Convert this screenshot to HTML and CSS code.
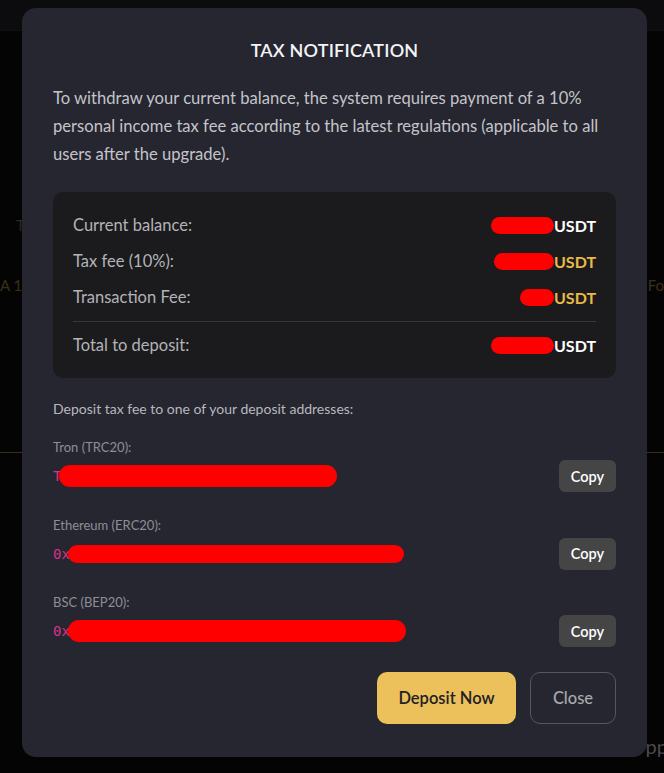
FILE: index.html
```html
<!DOCTYPE html>
<html lang="en">
<head>
<meta charset="utf-8">
<title>Tax Notification</title>
<link rel="stylesheet" href="styles.css">
</head>
<body>
<div class="page">
  <div class="page-header"></div>
  <div class="page-body">
    <div class="page-row page-row-head"><span>T</span><span></span></div>
    <div class="page-row page-row-data"><span>A 10</span><span>Fo</span></div>
    <div class="page-rule"></div>
    <div class="page-row page-row-foot"><span></span><span class="dim">pp</span></div>
  </div>
</div>

<div class="overlay">
  <div class="modal">
    <h2 class="modal-title">TAX NOTIFICATION</h2>
    <p class="modal-text">To withdraw your current balance, the system requires payment of a 10% personal income tax fee according to the latest regulations (applicable to all users after the upgrade).</p>

    <div class="summary">
      <div class="summary-row">
        <span class="label">Current balance:</span>
        <span class="value"><span class="redact" style="width:63px"></span><b class="usdt">USDT</b></span>
      </div>
      <div class="summary-row">
        <span class="label">Tax fee (10%):</span>
        <span class="value"><span class="redact" style="width:60px"></span><b class="usdt gold">USDT</b></span>
      </div>
      <div class="summary-row">
        <span class="label">Transaction Fee:</span>
        <span class="value"><span class="redact" style="width:34px"></span><b class="usdt gold">USDT</b></span>
      </div>
      <div class="summary-divider"></div>
      <div class="summary-row">
        <span class="label">Total to deposit:</span>
        <span class="value"><span class="redact" style="width:63px"></span><b class="usdt">USDT</b></span>
      </div>
    </div>

    <p class="deposit-intro">Deposit tax fee to one of your deposit addresses:</p>

    <div class="address-group">
      <div class="address-label">Tron (TRC20):</div>
      <div class="address-row">
        <div class="address"><code>T</code><span class="redact addr" style="width:278px"></span></div>
        <button class="copy-btn">Copy</button>
      </div>
    </div>

    <div class="address-group">
      <div class="address-label">Ethereum (ERC20):</div>
      <div class="address-row">
        <div class="address"><code>0x</code><span class="redact addr thin" style="width:336px"></span></div>
        <button class="copy-btn">Copy</button>
      </div>
    </div>

    <div class="address-group">
      <div class="address-label">BSC (BEP20):</div>
      <div class="address-row">
        <div class="address"><code>0x</code><span class="redact addr" style="width:338px"></span></div>
        <button class="copy-btn">Copy</button>
      </div>
    </div>

    <div class="modal-actions">
      <button class="btn btn-primary">Deposit Now</button>
      <button class="btn btn-outline">Close</button>
    </div>
  </div>
</div>
</body>
</html>
```

FILE: styles.css
```css
* { box-sizing: border-box; }

html, body {
  margin: 0;
  padding: 0;
}

body {
  width: 664px;
  height: 773px;
  overflow: hidden;
  background: #040404;
  font-family: Lato, "Noto Sans", sans-serif;
  color: #c8c8cc;
}

/* dimmed page behind the modal */
.page {
  height: 773px;
}
.page-header {
  height: 31px;
  background: #0c0c0e;
  border-bottom: 1px solid #111114;
}
.page-row {
  display: flex;
  justify-content: space-between;
  font-size: 15px;
  color: #2e2a20;
}
.page-row-head {
  margin-top: 185px;
  padding-left: 16px;
  height: 20px;
}
.page-row-data {
  margin-top: 40px;
  height: 22px;
  color: #3a3018;
}
.page-rule {
  margin-top: 154px;
  height: 1px;
  background: #3a3016;
}
.page-row-foot {
  margin-top: 281px;
  font-size: 20px;
  justify-content: flex-end;
}
.page-row .dim {
  color: #4a4a50;
  margin-right: -4px;
}

/* overlay & modal */
.overlay {
  position: fixed;
  inset: 0;
  display: flex;
  justify-content: flex-start;
  align-items: flex-start;
  padding: 8px 0 0 22px;
}
.modal {
  width: 625px;
  height: 749px;
  background: #252630;
  border-radius: 14px;
  padding: 28px 31px 32px;
  display: flex;
  flex-direction: column;
}
.modal-title {
  margin: 0;
  text-align: center;
  font-size: 18px;
  line-height: 28px;
  font-weight: 600;
  color: #f4f4f6;
  letter-spacing: 0.2px;
}
.modal-text {
  margin: 20px 0 0;
  font-size: 16.6px;
  line-height: 28px;
  color: #c4c4c9;
}

.summary {
  margin-top: 24px;
  background: #1b1b1d;
  border-radius: 10px;
  padding: 21px 20px 21px;
  display: flex;
  flex-direction: column;
  gap: 12px;
}
.summary-row {
  display: flex;
  justify-content: space-between;
  align-items: center;
  height: 24px;
  font-size: 16.5px;
}
.summary-row .label {
  color: #b3b3b8;
}
.value {
  display: flex;
  align-items: center;
}
.usdt {
  font-weight: 700;
  color: #ffffff;
  font-size: 16px;
}
.usdt.gold {
  color: #e9b949;
}
.summary-divider {
  height: 1px;
  background: #37373b;
  margin-bottom: -1px;
}

.redact {
  display: inline-block;
  height: 17px;
  background: #ff0000;
  border-radius: 9px;
}

.deposit-intro {
  margin: 21px 0 0;
  font-size: 14px;
  line-height: 20px;
  color: #b8b8bd;
}

.address-group {
  margin-top: 23.5px;
  display: flex;
  flex-direction: column;
  gap: 4px;
}
.deposit-intro + .address-group {
  margin-top: 19px;
}
.address-label {
  font-size: 13px;
  line-height: 18px;
  color: #8e8e94;
}
.address-row {
  display: flex;
  justify-content: space-between;
  align-items: center;
  height: 32px;
}
.address {
  display: flex;
  align-items: center;
}
.address code {
  font-family: "DejaVu Sans Mono", "Liberation Mono", monospace;
  font-size: 14px;
  color: #d63384;
}
.redact.addr {
  height: 22px;
  border-radius: 11px;
  margin-left: -2px;
}
.redact.addr.thin {
  height: 18px;
}
.copy-btn {
  width: 57px;
  height: 32px;
  border: none;
  border-radius: 6px;
  background: #454546;
  color: #ffffff;
  font-family: Lato, "Noto Sans", sans-serif;
  font-size: 14.5px;
  font-weight: 600;
  padding: 0;
}

.modal-actions {
  margin-top: 25px;
  display: flex;
  justify-content: flex-end;
  gap: 14px;
}
.btn {
  height: 52px;
  border-radius: 10px;
  font-family: Lato, "Noto Sans", sans-serif;
  font-size: 16.5px;
  font-weight: 600;
  padding: 0;
}
.btn-primary {
  width: 139px;
  background: #ecc05b;
  border: none;
  color: #222226;
}
.btn-outline {
  width: 86px;
  background: transparent;
  border: 1px solid #55565e;
  color: #a9a9ae;
  font-weight: 500;
}
```
